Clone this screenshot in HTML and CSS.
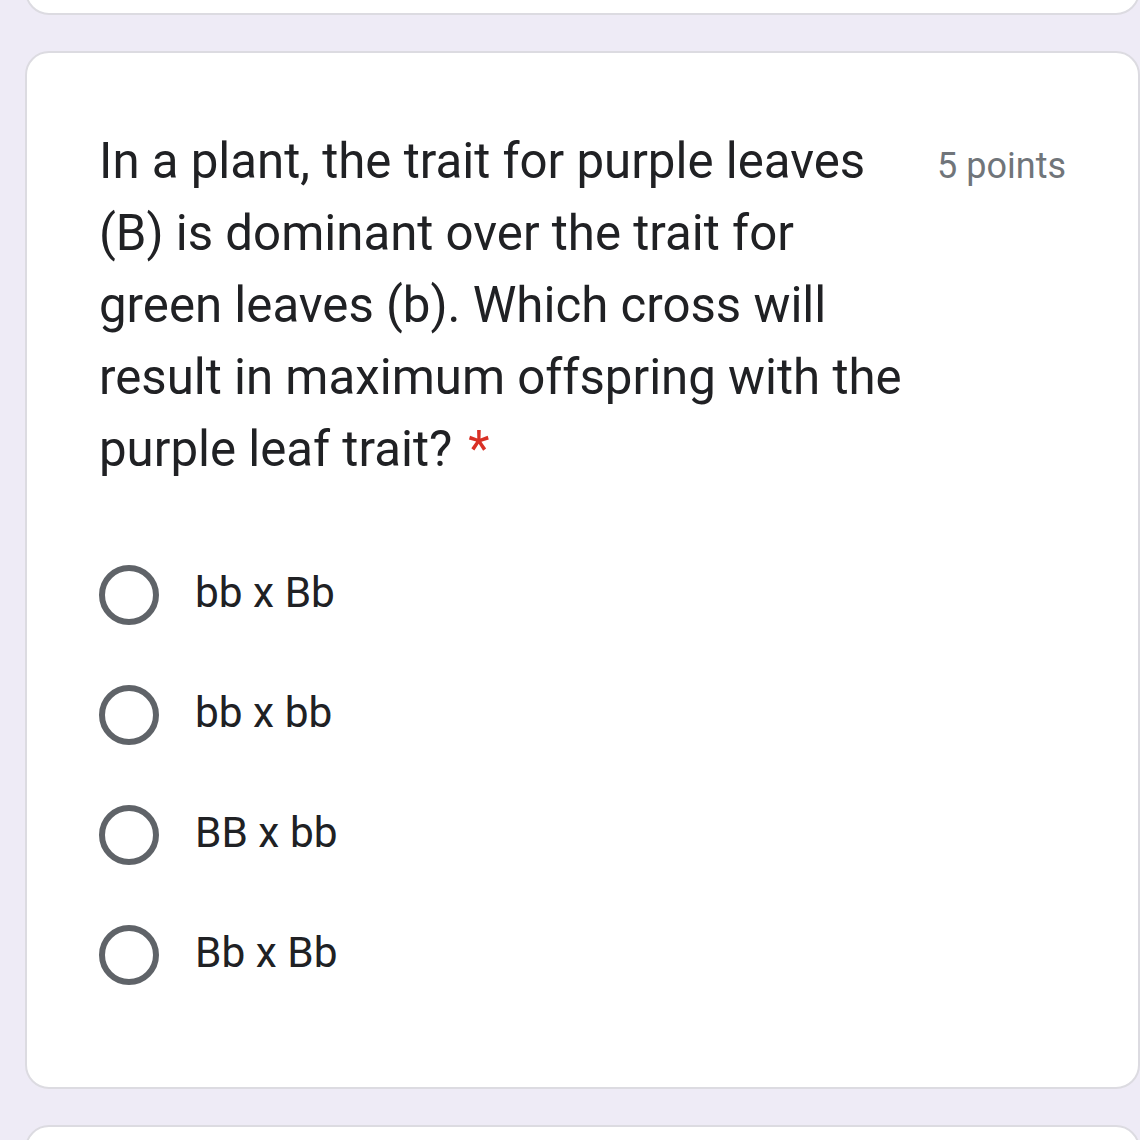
FILE: index.html
```html
<!DOCTYPE html>
<html lang="en">
<head>
<meta charset="utf-8">
<title>Question</title>
<link rel="stylesheet" href="styles.css">
</head>
<body>
<div class="viewport">
  <div class="list">
    <div class="card card-prev"></div>
    <div class="card question-card">
      <div class="question-head">
        <div class="question-title">In a plant, the trait for purple leaves (B) is dominant over the trait for green leaves (b). Which cross will result in maximum offspring with the purple leaf trait?<span class="required">*</span></div>
        <div class="points">5 points</div>
      </div>
      <div class="options">
        <label class="option"><span class="radio"></span><span class="option-text">bb x Bb</span></label>
        <label class="option"><span class="radio"></span><span class="option-text">bb x bb</span></label>
        <label class="option"><span class="radio"></span><span class="option-text">BB x bb</span></label>
        <label class="option"><span class="radio"></span><span class="option-text">Bb x Bb</span></label>
      </div>
    </div>
    <div class="card card-next"></div>
  </div>
</div>
</body>
</html>
```
FILE: styles.css
```css
html, body {
  margin: 0;
  padding: 0;
  background: #eeebf6;
}
.viewport {
  width: 1140px;
  height: 1140px;
  overflow: hidden;
}
.list {
  display: flex;
  flex-direction: column;
  gap: 36px;
  margin-left: 25px;
  margin-top: -85px;
}
.card {
  background: #ffffff;
  border: 2px solid #dcdbe1;
  border-radius: 24px;
  box-sizing: border-box;
  flex: none;
}
.card-prev {
  height: 100px;
}
.card-next {
  height: 100px;
}
.question-card {
  padding: 72px;
}
.question-head {
  display: flex;
  align-items: baseline;
  gap: 30px;
}
.question-title {
  flex: 1;
  font-family: Roboto, "Liberation Sans", sans-serif;
  font-size: 49.2px;
  line-height: 72px;
  color: #202124;
}
.required {
  color: #d93025;
  margin-left: 16px;
}
.points {
  font-family: Roboto, "Liberation Sans", sans-serif;
  font-size: 36px;
  color: #70757a;
  white-space: nowrap;
}
.options {
  display: flex;
  flex-direction: column;
  margin-top: 50px;
}
.option {
  display: flex;
  align-items: center;
  height: 120px;
}
.radio {
  width: 60px;
  height: 60px;
  box-sizing: border-box;
  border: 6px solid #5f6368;
  border-radius: 50%;
  flex: none;
}
.option-text {
  margin-left: 36px;
  padding-bottom: 6px;
  font-family: Roboto, "Liberation Sans", sans-serif;
  font-size: 42.4px;
  color: #202124;
}
```
